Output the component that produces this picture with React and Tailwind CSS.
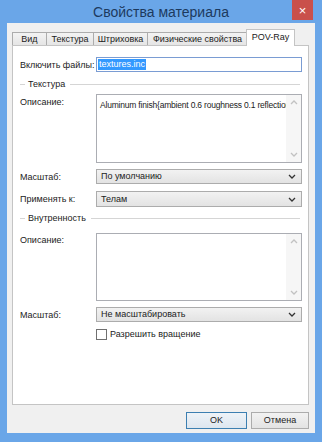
import React from 'react';

const font = { fontFamily: '"Liberation Sans", Arial, sans-serif' };

const tabs = [
    { label: 'Вид', w: 'w-[35px]' },
    { label: 'Текстура', w: 'w-[48px]' },
    { label: 'Штриховка', w: 'w-[55px]' },
    { label: 'Физические свойства', w: 'w-[101px]' },
];

const Chevron = ({ className }) => (
    <svg width="8" height="5" viewBox="0 0 8 5" className={className}>
        <polyline points="1,1 4,4 7,1" fill="none" stroke="currentColor" strokeWidth="1.3" />
    </svg>
);

const Select = ({ value, h = 'h-[15px]' }) => (
    <div className={`flex items-center justify-between border border-[#acacac] bg-gradient-to-b from-[#f2f2f2] to-[#e3e3e3] pl-[4px] pr-[5px] ${h}`}>
        <span className="text-[9px] leading-none text-[#222]">{value}</span>
        <Chevron className="text-[#333]" />
    </div>
);

const TextArea = ({ text, h }) => (
    <div className={`flex border border-[#abadb3] bg-white ${h}`}>
        <div className="min-w-0 flex-1 overflow-hidden whitespace-nowrap pl-[3px] pt-[4px] text-[8.5px] leading-[12px] tracking-[-0.2px] text-[#222]">
            {text}
        </div>
        <div className="flex w-[15px] shrink-0 flex-col items-center justify-between bg-[#f6f6f6] py-[5px] text-[#c2c2c2]">
            <Chevron className="rotate-180" />
            <Chevron />
        </div>
    </div>
);

const Group = ({ title, mt }) => (
    <div className={`flex h-[12px] items-center pl-[7px] pr-[8px] ${mt}`}>
        <div className="h-px w-[5px] bg-[#d5d5d5]" />
        <span className="ml-[3px] mr-[5px] text-[9px] leading-none text-[#222]">{title}</span>
        <div className="h-px flex-1 bg-[#d5d5d5]" />
    </div>
);

const Row = ({ label, children, mt, items = 'items-center', labelPt = '' }) => (
    <div className={`flex pl-[7px] pr-[6px] ${items} ${mt}`}>
        <div className={`w-[76px] shrink-0 whitespace-nowrap text-[9px] leading-[12px] text-[#222] ${labelPt}`}>{label}</div>
        <div className="min-w-0 flex-1">{children}</div>
    </div>
);

export default function App() {
    return (
        <div style={font} className="flex h-[442px] w-[322px] flex-col bg-[#6aa6e8] px-[7px] pb-[9px]">
            <div className="relative flex h-[23px] shrink-0 items-center justify-center">
                <span className="text-[14px] leading-none text-[#1d3a5e]">Свойства материала</span>
                <div className="absolute right-[2px] top-0 flex h-[20px] w-[21px] items-center justify-center bg-[#c9504b] text-[13px] leading-none text-white">
                    ×
                </div>
            </div>

            <div className="flex h-[410px] flex-col bg-[#f0f0f0] pl-[5px] pr-[6px]">
                <div className="flex h-[22px] items-end">
                    {tabs.map((t, i) => (
                        <div
                            key={t.label}
                            className={`flex h-[13px] items-center justify-center whitespace-nowrap border border-b-0 border-[#acacac] bg-gradient-to-b from-[#f3f3f3] to-[#e5e5e5] text-[9px] leading-none text-[#222] ${t.w} ${i > 0 ? '-ml-px' : ''}`}
                        >
                            {t.label}
                        </div>
                    ))}
                    <div className="relative z-10 -mb-px -ml-[2px] flex h-[17px] w-[49px] items-start justify-center border border-b-0 border-[#c4c4c4] bg-white pt-[3px] text-[9px] leading-none text-[#222]">
                        POV-Ray
                    </div>
                </div>

                <div className="flex h-[360px] flex-col border border-[#c4c4c4] bg-white">
                    <Row label="Включить файлы:" mt="mt-[11px]">
                        <div className="flex h-[15px] items-center border border-[#7a9cd3] bg-white pl-[1px]">
                            <span className="bg-[#3399ff] px-[1px] text-[9px] leading-[11px] text-white">textures.inc</span>
                        </div>
                    </Row>

                    <Group title="Текстура" mt="mt-[6px]" />

                    <Row label="Описание:" mt="mt-[4px]" items="items-start" labelPt="pt-[2px]">
                        <TextArea h="h-[69px]" text="Aluminum finish{ambient 0.6 roughness 0.1 reflection 0.5}" />
                    </Row>

                    <Row label="Масштаб:" mt="mt-[6px]">
                        <Select value="По умолчанию" />
                    </Row>

                    <Row label="Применять к:" mt="mt-[7px]">
                        <Select value="Телам" h="h-[16px]" />
                    </Row>

                    <Group title="Внутренность" mt="mt-[5px]" />

                    <Row label="Описание:" mt="mt-[9px]" items="items-start" labelPt="pt-[1px]">
                        <TextArea h="h-[68px]" text="" />
                    </Row>

                    <Row label="Масштаб:" mt="mt-[6px]">
                        <Select value="Не масштабировать" />
                    </Row>

                    <Row label="" mt="mt-[7px]">
                        <div className="flex items-center gap-[3px]">
                            <div className="h-[11px] w-[11px] border border-[#707070] bg-white" />
                            <span className="text-[9px] leading-none text-[#222]">Разрешить вращение</span>
                        </div>
                    </Row>
                </div>

                <div className="mt-[7px] flex justify-end gap-[4px]">
                    <div className="flex h-[17px] w-[61px] items-center justify-center border border-[#3c7fb1] bg-gradient-to-b from-[#eef3f8] to-[#dde6ef] text-[9px] leading-none text-[#222]">
                        OK
                    </div>
                    <div className="flex h-[17px] w-[58px] items-center justify-center border border-[#acacac] bg-gradient-to-b from-[#f2f2f2] to-[#e3e3e3] text-[9px] leading-none text-[#222]">
                        Отмена
                    </div>
                </div>
            </div>
        </div>
    );
}
